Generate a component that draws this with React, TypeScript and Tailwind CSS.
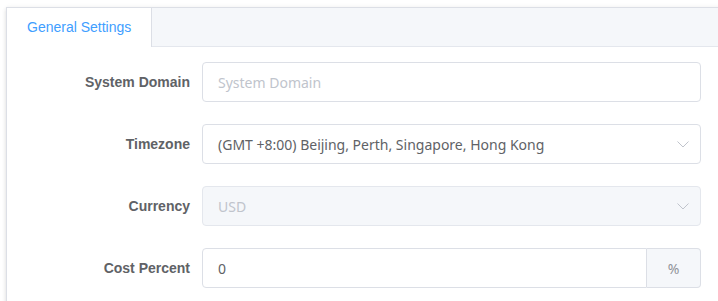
import { type ReactNode } from "react";

const fieldFont = "font-['Noto_Sans','Open_Sans',Arial,sans-serif]";

function Chevron() {
  return (
    <svg width="14" height="14" viewBox="0 0 14 14" className="text-[#c0c4cc]">
      <path d="M1.5 4.5 L7 10 L12.5 4.5" fill="none" stroke="currentColor" strokeWidth="1" />
    </svg>
  );
}

function FormRow({ label, children }: { label: string; children: ReactNode }) {
  return (
    <div className="mb-[22px] flex items-center">
      <label className="w-[180px] shrink-0 pr-[12px] text-right text-[14px] font-bold text-[#606266]">{label}</label>
      <div className="w-[499px]">{children}</div>
    </div>
  );
}

export default function App() {
  return (
    <div className="h-[301px] overflow-hidden bg-white font-['Liberation_Sans',Arial,sans-serif]">
      <div className="ml-[6px] mt-[7px] w-[760px] border border-[#dcdfe6] bg-white shadow-[0_2px_4px_0_rgba(0,0,0,0.12),0_0_6px_0_rgba(0,0,0,0.04)]">
        <div className="flex h-[39px] border-b border-[#e4e7ed] bg-[#f5f7fa]">
          <div className="-mb-px flex h-[39px] w-[145px] items-center border-r border-[#dcdfe6] bg-white pl-[20px] text-[14px] text-[#409eff]">
            General Settings
          </div>
        </div>
        <div className="p-[15px]">
          <FormRow label="System Domain">
            <div className={`flex h-[40px] items-center rounded-[4px] border border-[#dcdfe6] bg-white px-[15px] text-[14px] text-[#c0c4cc] ${fieldFont}`}>
              System Domain
            </div>
          </FormRow>
          <FormRow label="Timezone">
            <div className={`flex h-[40px] items-center justify-between rounded-[4px] border border-[#dcdfe6] bg-white pl-[15px] pr-[10px] text-[14px] text-[#606266] ${fieldFont}`}>
              <span>(GMT +8:00) Beijing, Perth, Singapore, Hong Kong</span>
              <Chevron />
            </div>
          </FormRow>
          <FormRow label="Currency">
            <div className={`flex h-[40px] items-center justify-between rounded-[4px] border border-[#e4e7ed] bg-[#f5f7fa] pl-[15px] pr-[10px] text-[14px] text-[#c0c4cc] ${fieldFont}`}>
              <span>USD</span>
              <Chevron />
            </div>
          </FormRow>
          <FormRow label="Cost Percent">
            <div className={`flex h-[40px] text-[14px] ${fieldFont}`}>
              <div className="flex flex-1 items-center rounded-l-[4px] border border-[#dcdfe6] bg-white px-[15px] text-[#606266]">0</div>
              <div className="flex w-[54px] items-center justify-center rounded-r-[4px] border border-l-0 border-[#dcdfe6] bg-[#f5f7fa] text-[#909399]">
                %
              </div>
            </div>
          </FormRow>
        </div>
      </div>
    </div>
  );
}
